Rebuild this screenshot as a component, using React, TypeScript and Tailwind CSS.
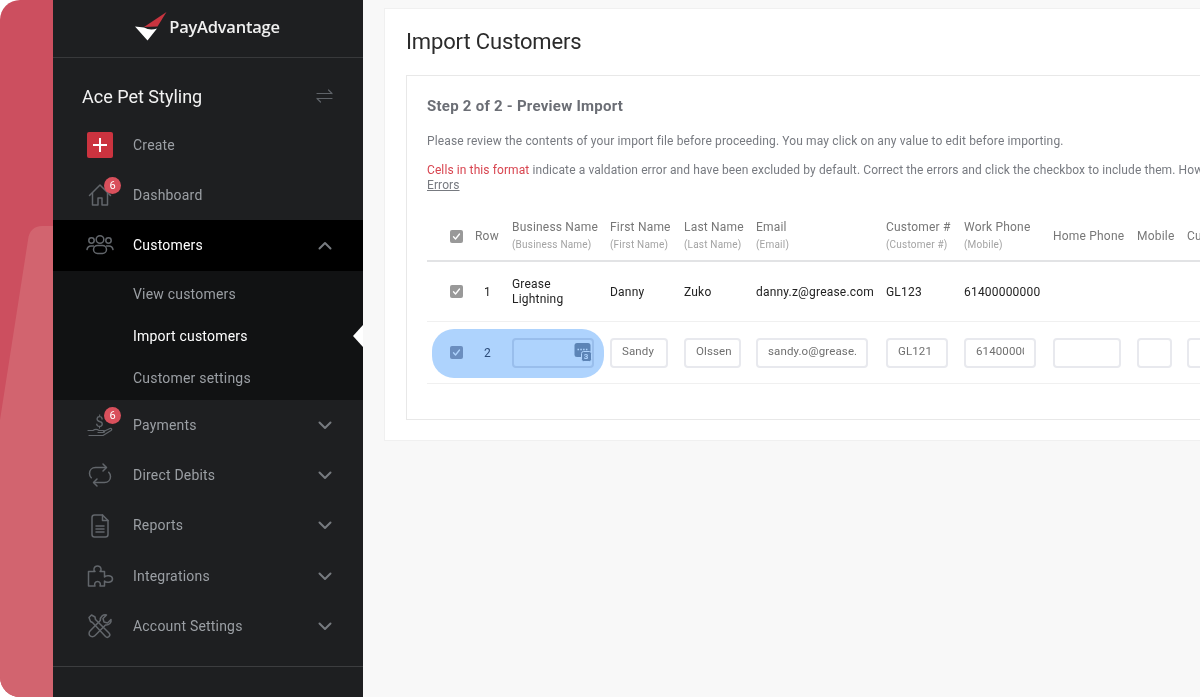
import React from "react";

const C = "#62666b";

function Svg({ children, w = 28, h = 28 }: { children: React.ReactNode; w?: number; h?: number }) {
  return (
    <svg width={w} height={h} viewBox={`0 0 ${w} ${h}`} fill="none" stroke={C} strokeWidth={1.5} strokeLinecap="round" strokeLinejoin="round">
      {children}
    </svg>
  );
}

const House = () => (
  <Svg>
    <path d="M3.500 14.500 14 4l10.500 10.500" />
    <path d="M6.500 12v12h5.500v-7h4v7h5.500V12" />
  </Svg>
);
const People = () => (
  <Svg>
    <circle cx="14" cy="7.500" r="3.800" />
    <circle cx="5.500" cy="8.500" r="2.700" />
    <circle cx="22.500" cy="8.500" r="2.700" />
    <path d="M1 17.500c.5-2.200 2-3.500 4-3.500h2.500" />
    <path d="M27 17.500c-.5-2.200-2-3.500-4-3.500h-2.500" />
    <rect x="7.500" y="13.500" width="13" height="8" rx="4" />
  </Svg>
);
const Hand = () => (
  <Svg>
    <text x="13.500" y="15.500" textAnchor="middle" fontSize="15" fill={C} stroke="none">$</text>
    <path d="M2 19.500h5c2-1.400 4-1.400 6 0h4.500c1.500 0 1.500 2-.2 2H12" strokeWidth={1.2} />
    <path d="M17.500 20.500 24 17.500c1.500-.5 2.500 1 1 2l-8 5H3" strokeWidth={1.2} />
  </Svg>
);
const Repeat = () => (
  <Svg>
    <path d="M17 3l3.500 3.500L17 10" />
    <path d="M20 6.500H9.500C6 6.500 3.500 9 3.500 12.500c0 1.800.8 3.300 1.800 4.300" />
    <path d="M11 25l-3.500-3.500L11 18" />
    <path d="M8 21.500h10.500c3.500 0 6-2.500 6-6 0-1.800-.8-3.300-1.800-4.300" />
  </Svg>
);
const FileI = () => (
  <Svg>
    <path d="M16.500 3H8.500C7.100 3 6 4.100 6 5.500v17C6 23.900 7.100 25 8.500 25h11c1.400 0 2.500-1.100 2.500-2.500V8.500z" />
    <path d="M16.500 3v5.500H22" />
    <path d="M10 14h8M10 17h8M10 20h8" />
  </Svg>
);
const Puzzle = () => (
  <Svg>
    <path d="M2.500 9.500h6.500c-1.800-1-1.500-5.500 2.500-5.500s4.300 4.500 2.500 5.500h4.500v5.500c1.500-2 8-1.800 8 2s-6.500 4-8 2v5h-4.500c1-2.200-.2-4.500-2.500-4.500s-3.500 2.300-2.500 4.500H2.500z" />
  </Svg>
);
const Tools = () => (
  <Svg>
    <path d="M3 5.500 5.500 3 9 5l.5 2.500 13.500 13.500c1 1 1 2.500 0 3.500s-2.500 1-3.500 0L6.500 10.500 4.500 9.500z" />
    <path d="M25 7.500l-3.500 3.500-3.500-1-1-3.500L20.500 3c-3-.8-6.500 1.500-6.200 5.500L4 19c-1.200 1.200-1.200 3.600 0 4.800s3.600 1.200 4.800 0L19.500 13c3.500.5 6.300-2.500 5.500-5.500z" />
  </Svg>
);

const Chevron = ({ up }: { up?: boolean }) => (
  <svg width="14" height="9" viewBox="0 0 14 9" fill="none" stroke="#777b80" strokeWidth="2" strokeLinecap="round" strokeLinejoin="round">
    {up ? <path d="M1.500 7.500 7 2l5.500 5.500" /> : <path d="M1.500 1.500 7 7l5.500-5.500" />}
  </svg>
);

const Badge = () => (
  <span className="absolute left-[18px] -top-[4px] flex h-[17px] w-[17px] items-center justify-center rounded-full bg-[#d9505c] text-[11px] leading-none text-white">6</span>
);

function NavRow({ icon, label, badge, chevron, active, h = "h-[50px]" }: { icon: React.ReactNode; label: string; badge?: boolean; chevron?: boolean; active?: boolean; h?: string }) {
  return (
    <div className={`flex ${h} items-center pl-[33px] pr-[31px] ${active ? "bg-black text-white" : "text-[#9b9fa4]"}`}>
      <div className="relative flex w-[28px] items-center justify-center">
        {icon}
        {badge && <Badge />}
      </div>
      <span className="ml-[19px] flex-1 text-[14px] tracking-[0.2px]">{label}</span>
      {chevron && <Chevron up={active} />}
    </div>
  );
}

const Check = ({ className = "", bg = "bg-[#999]" }: { className?: string; bg?: string }) => (
  <span className={`flex h-[13px] w-[13px] items-center justify-center rounded-[2px] ${bg} ${className}`}>
    <svg width="9" height="9" viewBox="0 0 9 9" fill="none" stroke="#fff" strokeWidth="1.300" strokeLinecap="round" strokeLinejoin="round">
      <path d="M1.500 4.800 3.500 7l4-5" />
    </svg>
  </span>
);

const cols = "grid grid-cols-[48px_37px_98px_74px_72px_130px_78px_89px_84px_50px_100px] items-center";

const Head = ({ a, b }: { a: string; b?: string }) => (
  <div className="whitespace-nowrap">
    <div className={`text-[12px] tracking-[0.2px] text-[#777] ${b ? "leading-[17px] pb-[1px] -mt-[1px]" : "leading-[18px]"}`}>{a}</div>
    {b && <div className="text-[10px] leading-[16px] tracking-[0.2px] text-[#a3a3a3]">{b}</div>}
  </div>
);

const Input = ({ w, v, pr = "pr-[10px]" }: { w: string; v?: string; pr?: string }) => (
  <div className={`flex h-[30px] ${w} items-center overflow-hidden rounded-[4px] border-2 border-[#e8e9ee] bg-white pl-[10px] ${pr} text-[11.5px] tracking-[0.12px] text-[#6f6f6f]`}>
    <span className="block overflow-hidden whitespace-nowrap pb-[2px]">{v}</span>
  </div>
);

const Val = ({ children, color = "text-[#222]" }: { children: React.ReactNode; color?: string }) => (
  <div className={`whitespace-nowrap text-[12px] tracking-[0.2px] ${color}`}>{children}</div>
);

export default function App() {
  return (
    <div className="flex h-[697px] w-[1200px] overflow-hidden bg-white [font-family:Roboto,sans-serif]">
      {/* left strip */}
      <div className="relative h-full w-[53px] shrink-0 overflow-hidden rounded-l-[20px] bg-[#cc4f5f]">
        <svg className="absolute inset-0" width="53" height="697" viewBox="0 0 53 697">
          <path d="M53 226H42c-8 0-13 5-14 14L0 420V697H53Z" fill="#d2646f" />
        </svg>
      </div>

      {/* sidebar */}
      <aside className="relative flex h-full w-[310px] shrink-0 flex-col bg-[#1e1f21]">
        <div className="flex h-[58px] shrink-0 items-center justify-center border-b border-[#38393b] pb-[3px] pr-[2px]">
          <svg width="34" height="30" viewBox="0 0 34 30" className="mr-[1px] -mt-[2px]">
            <path d="M32.500 1 10 16l13.500-.5z" fill="#c8343f" />
            <path d="M1 15.500 10 16.500Q16 20 23 17.500L13.500 29.500z" fill="#fff" />
          </svg>
          <span className="text-[16.5px] font-semibold tracking-[-0.25px] text-[#f0f0f0] [font-family:'Open_Sans',sans-serif]">PayAdvantage</span>
        </div>

        <div className="flex h-[62px] shrink-0 items-center justify-between pl-[29px] pr-[30px] pt-[14px]">
          <span className="text-[18px] text-[#f2f2f2]">Ace Pet Styling</span>
          <svg width="17" height="14" viewBox="0 0 17 14" fill="none" stroke="#5f6368" strokeWidth="1.200" strokeLinecap="round" strokeLinejoin="round">
            <path d="M1 4.500h15M12.500 1 16 4.500M16 9.500H1M4.500 13 1 9.500" />
          </svg>
        </div>

        <div className="shrink-0">
          <NavRow
            label="Create"
            icon={
              <span className="flex h-[26px] w-[26px] items-center justify-center rounded-[2px] bg-[#cb333f]">
                <svg width="14" height="14" viewBox="0 0 14 14" stroke="#fff" strokeWidth="2"><path d="M7 0v14M0 7h14" /></svg>
              </span>
            }
          />
          <NavRow label="Dashboard" badge icon={<House />} />
          <NavRow label="Customers" active chevron icon={<People />} h="h-[51px]" />
          <div className="flex h-[129px] flex-col justify-center bg-[#111213] pl-[80px] pt-[2px] text-[14px] tracking-[0.2px] text-[#9b9fa4]">
            <div className="flex h-[43px] items-center">View customers</div>
            <div className="flex h-[43px] items-center text-white">Import customers</div>
            <div className="flex h-[43px] items-center">Customer settings</div>
          </div>
          <NavRow label="Payments" badge chevron icon={<Hand />} />
          <NavRow label="Direct Debits" chevron icon={<Repeat />} />
          <NavRow label="Reports" chevron icon={<FileI />} h="h-[51px]" />
          <NavRow label="Integrations" chevron icon={<Puzzle />} />
          <NavRow label="Account Settings" chevron icon={<Tools />} />
        </div>
        <div className="mt-[15px] border-t border-[#3c3d3f]" />
        {/* active caret */}
        <span className="absolute right-0 top-[325px] h-0 w-0 border-y-[11px] border-r-[10px] border-y-transparent border-r-white" />
      </aside>

      {/* main */}
      <main className="min-w-0 flex-1 overflow-hidden bg-[#f8f8f8] pl-[21px] pt-[8px]">
        <section className="h-[433px] w-[900px] border border-[#f0f0f0] bg-white pl-[21px] pt-[15px]">
          <h1 className="text-[22px] leading-[36px] tracking-[-0.15px] text-[#2b2b2b]">Import Customers</h1>
          <div className="mt-[15px] h-[345px] border border-[#e8e8e8] pl-[20px] pt-[20px]">
            <h2 className="text-[15px] font-bold leading-[20px] tracking-[0.25px] text-[#6b6e75]">Step 2 of 2 - Preview Import</h2>
            <p className="mt-[15px] text-[12px] leading-[20px] tracking-[0.13px] text-[#777a80]">
              Please review the contents of your import file before proceeding. You may click on any value to edit before importing.
            </p>
            <p className="mt-[12px] w-[900px] text-[12px] leading-[15px] tracking-[0.1px] text-[#777a80]">
              <span className="text-[#d8444f]">Cells in this format</span> indicate a valdation error and have been excluded by default. Correct the errors and click the checkbox to include them. How to Fix
              <br />
              <span className="underline">Errors</span>
            </p>

            <div className="relative mt-[19px] w-[900px]">
              <div className={`${cols} h-[50px] border-b-2 border-[#e2e3e5]`}>
                <Check className="ml-[23px]" />
                <Head a="Row" />
                <Head a="Business Name" b="(Business Name)" />
                <Head a="First Name" b="(First Name)" />
                <Head a="Last Name" b="(Last Name)" />
                <Head a="Email" b="(Email)" />
                <Head a="Customer #" b="(Customer #)" />
                <Head a="Work Phone" b="(Mobile)" />
                <Head a="Home Phone" />
                <Head a="Mobile" />
                <Head a="Cu" />
              </div>
              <div className={`${cols} h-[60px] border-b border-[#f0f0f0]`}>
                <Check className="ml-[23px]" />
                <div className="pl-[9px]"><Val>1</Val></div>
                <div className="text-[12px] leading-[15px] tracking-[0.2px] text-[#222]">Grease<br />Lightning</div>
                <Val>Danny</Val>
                <Val>Zuko</Val>
                <Val>danny.z@grease.com</Val>
                <Val>GL123</Val>
                <Val>61400000000</Val>
              </div>
              <div className={`${cols} h-[62px] border-b border-[#f0f0f0]`}>
                <Check className="ml-[23px]" bg="bg-[#9cacc1]" />
                <div className="pl-[9px]"><Val color="text-[#3e5a7a]">2</Val></div>
                <div className="relative h-[30px] w-[82px] rounded-[4px] border-2 border-[#e0e6ee] bg-white">
                  <svg className="absolute right-0 top-[3px]" width="18" height="20" viewBox="0 0 18 20">
                    <rect x="0.500" y="0" width="16" height="14" rx="2.500" fill="#86a0b8" />
                    <path d="M3.500 6.500h1.500M6.300 6.500h1.500M9.100 6.500h1.500M11.900 6.500h1.500" stroke="#fff" strokeWidth="1.500" />
                    <rect x="7.500" y="8.500" width="10" height="10" rx="2" fill="#86a0b8" stroke="#fff" />
                  </svg>
                  <span className="absolute right-[1px] top-[11px] flex h-[12px] w-[10px] items-center justify-center text-[8px] font-bold leading-none text-white">3</span>
                </div>
                <Input w="w-[58px]" v="Sandy" />
                <Input w="w-[57px]" v="Olssen" pr="pr-[7px]" />
                <Input w="w-[112px]" v="sandy.o@grease.com" />
                <Input w="w-[62px]" v="GL121" />
                <Input w="w-[72px]" v="61400000000" />
                <Input w="w-[68px]" />
                <Input w="w-[35px]" />
                <Input w="w-[60px]" />
              </div>
              {/* highlight over row 2 */}
              <div className="pointer-events-none absolute left-[5px] top-[117px] h-[49px] w-[172px] rounded-[22px] bg-[#aed3fd] mix-blend-multiply" />
            </div>
          </div>
        </section>
      </main>
    </div>
  );
}
